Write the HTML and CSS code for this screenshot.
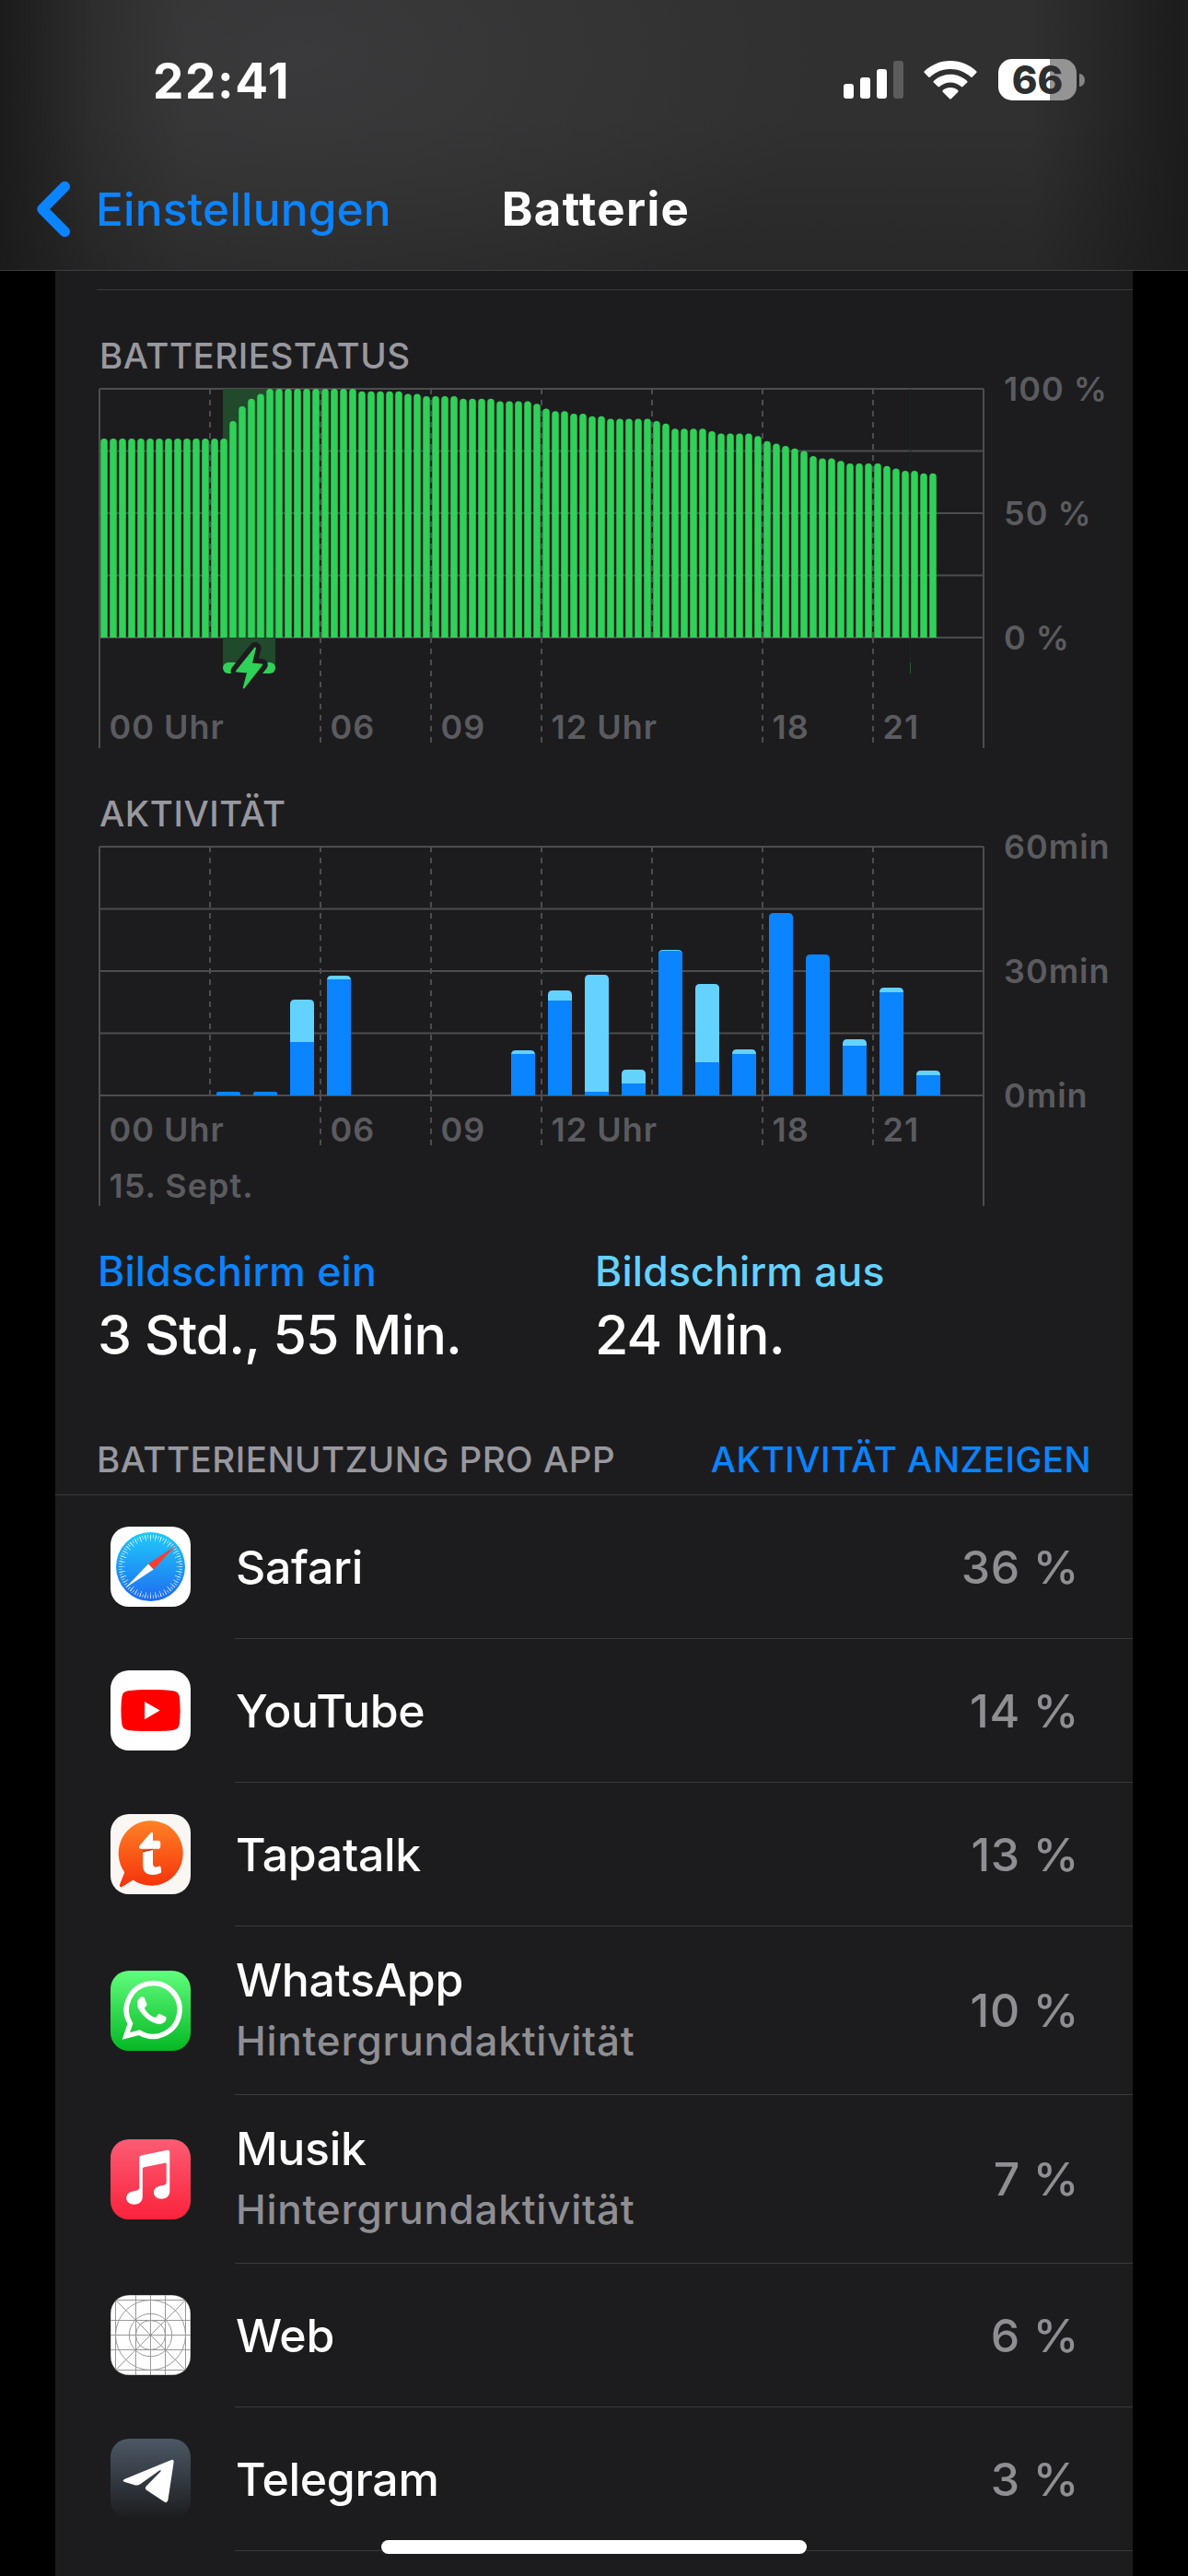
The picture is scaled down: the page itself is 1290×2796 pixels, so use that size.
FILE: index.html
```html
<!DOCTYPE html>
<html lang="de">
<head>
    <meta charset="UTF-8">
    <meta name="viewport" content="width=device-width, initial-scale=1.0">
    <title>Batterie</title>
    <link rel="stylesheet" href="styles.css">
</head>
<body>
    <header class="header">
        <div class="status-bar">
            <div class="time">22:41</div>
            <div class="status-icons">
                <svg class="signal" width="65" height="41" viewBox="0 0 65 41" fill="#fff">
                    <rect x="0" y="25" width="11" height="16" rx="3"/>
                    <rect x="18" y="18" width="11" height="23" rx="3"/>
                    <rect x="36" y="9" width="11" height="32" rx="3"/>
                    <rect x="54" y="0" width="11" height="41" rx="3" fill="#5c5c5d"/>
                </svg>
                <svg class="wifi" width="58" height="42" viewBox="0 0 58 42" fill="#fff">
                    <path d="M29 0C40 0 50 4.300 57.200 11.300Q58 12.200 57.200 13L52.600 17.700Q51.800 18.300 51 17.600C45 12 37.500 9 29 9S13 12 7 17.600Q6.200 18.300 5.400 17.700L.8 13Q0 12.200.8 11.300C8 4.300 18 0 29 0Z"/>
                    <path d="M29 14.700C36 14.700 42.300 17.400 47.200 21.900Q47.900 22.700 47.200 23.500L42.500 28.100Q41.700 28.800 40.900 28.100C37.500 25.200 33.500 23.500 29 23.500S20.500 25.200 17.100 28.100Q16.300 28.800 15.500 28.100L10.800 23.500Q10.100 22.700 10.800 21.900C15.700 17.400 22 14.700 29 14.700Z"/>
                    <path d="M29 29C32.200 29 35 30.200 37.300 32.100Q38 32.900 37.300 33.700L29.800 41.200Q29 42 28.200 41.200L20.700 33.700Q20 32.900 20.700 32.100C23 30.200 25.800 29 29 29Z"/>
                </svg>
                <div class="battery"><span class="battery-level">66</span></div>
                <div class="battery-cap"></div>
            </div>
        </div>
        <nav class="nav-bar">
            <a class="back">
                <svg width="37" height="62" viewBox="0 0 37 62" fill="none" stroke="#0a84ff" stroke-width="11.500" stroke-linecap="round" stroke-linejoin="round">
                    <path d="M30.300 6.500 6 31 30.300 55.500"/>
                </svg>
                <span>Einstellungen</span>
            </a>
            <h1>Batterie</h1>
        </nav>
    </header>

    <main class="card">
        <div class="top-line"></div>

        <h2 class="chart-title title-level">BATTERIESTATUS</h2>
        <svg class="chart" id="levelChart" width="1170" height="410"></svg>

        <h2 class="chart-title title-activity">AKTIVITÄT</h2>
        <svg class="chart" id="activityChart" width="1170" height="410"></svg>

        <div class="summary">
            <div>
                <div class="summary-label screen-on">Bildschirm ein</div>
                <div class="summary-value">3 Std., 55 Min.</div>
            </div>
            <div>
                <div class="summary-label screen-off">Bildschirm aus</div>
                <div class="summary-value">24 Min.</div>
            </div>
        </div>

        <div class="usage-header">
            <span class="usage-title">BATTERIENUTZUNG PRO APP</span>
            <a class="usage-toggle">AKTIVITÄT ANZEIGEN</a>
        </div>

        <ul class="app-list">
            <li class="app-row">
                <svg class="app-icon" viewBox="0 0 87 87">
                    <defs>
                        <linearGradient id="safariBg" x1="0" y1="0" x2="0" y2="1">
                            <stop offset="0" stop-color="#1fcbfb"/>
                            <stop offset="1" stop-color="#1f6bf0"/>
                        </linearGradient>
                    </defs>
                    <rect width="87" height="87" rx="20" fill="#fff"/>
                    <circle cx="43.500" cy="43.500" r="37.500" fill="url(#safariBg)"/>
                    <g fill="none" stroke="#fff" stroke-opacity=".85">
                        <circle cx="43.500" cy="43.500" r="32.800" stroke-width="3.600" pathLength="72" stroke-dasharray=".24 .76" stroke-dashoffset=".12"/>
                        <circle cx="43.500" cy="43.500" r="31.300" stroke-width="6.400" pathLength="36" stroke-dasharray=".12 .88" stroke-dashoffset=".06"/>
                    </g>
                    <path d="M70.400 21 41 40.600 46.700 46.600Z" fill="#ff3b30"/>
                    <path d="M16.500 66.200 41 40.600 46.700 46.600Z" fill="#fff"/>
                </svg>
                <div class="app-info">
                    <div class="app-name">Safari</div>
                </div>
                <div class="app-percent">36 %</div>
            </li>
            <li class="app-row">
                <svg class="app-icon" viewBox="0 0 87 87">
                    <rect width="87" height="87" rx="20" fill="#fff"/>
                    <path d="M43.500 21C54 21 62 21.300 68 22.200 72 22.900 74.200 25 74.700 28.500 76 38 76 49 74.700 58.500 74.200 62 72 64.200 68 64.900 56 66.300 31 66.300 19 64.900 15 64.200 12.900 62 12.400 58.500 11.100 49 11.100 38 12.400 28.500 12.900 25 15 22.900 19 22.200 25 21.300 33 21 43.500 21Z" fill="#f00"/>
                    <path d="M37 34 53.700 43.600 37 53.200Z" fill="#fff"/>
                </svg>
                <div class="app-info">
                    <div class="app-name">YouTube</div>
                </div>
                <div class="app-percent">14 %</div>
            </li>
            <li class="app-row">
                <svg class="app-icon" viewBox="0 0 87 87">
                    <defs>
                        <linearGradient id="tapatalkBg" x1="0" y1="0" x2="0" y2="1">
                            <stop offset="0" stop-color="#ff8124"/>
                            <stop offset="1" stop-color="#f5320c"/>
                        </linearGradient>
                    </defs>
                    <rect width="87" height="87" rx="20" fill="#faf6f4"/>
                    <path d="M43.600 7.300A34.500 35.200 0 1 1 24.500 71.400L12.500 78.900Q9.500 80 10 76.500L15.300 63.200A34.500 35.200 0 0 1 43.600 7.300Z" fill="url(#tapatalkBg)"/>
                    <path d="M35.200 39.500 46 37.500V42L35.200 41.500Z" fill="#c43a10"/>
                    <path d="M43.300 20.400Q46 18.500 46 21.500V28.800H52Q54.200 28.800 54.200 31V35.500Q54.200 37.700 52 37.700H33Q29.800 37.200 31.300 34.600Z" fill="#fff"/>
                    <path d="M35.200 41.500 46 39V54Q46.200 57.600 49.500 57.400L53 56.600Q54.400 56.400 54.500 57.500L55.200 62Q55.300 63.600 54 64.200 49 66.500 43 65.800 35.200 64.500 35.200 56Z" fill="#fff"/>
                </svg>
                <div class="app-info">
                    <div class="app-name">Tapatalk</div>
                </div>
                <div class="app-percent">13 %</div>
            </li>
            <li class="app-row app-row-tall">
                <svg class="app-icon" viewBox="0 0 87 87">
                    <defs>
                        <linearGradient id="whatsappBg" x1="0" y1="0" x2="0" y2="1">
                            <stop offset="0" stop-color="#60fd7c"/>
                            <stop offset="1" stop-color="#05b824"/>
                        </linearGradient>
                    </defs>
                    <rect width="87" height="87" rx="20" fill="url(#whatsappBg)"/>
                    <path d="M16.900 70.800 21.400 57.300A28.900 28.900 0 1 1 31.300 67.200Z" fill="none" stroke="#fff" stroke-width="5.500"/>
                    <path transform="translate(13.200 11.800) scale(2.620)" fill="#fff" d="M17.472 14.382c-.297-.149-1.758-.867-2.030-.967-.273-.099-.471-.148-.67.15-.197.297-.767.966-.94 1.164-.173.199-.347.223-.644.075-.297-.15-1.255-.463-2.390-1.475-.883-.788-1.480-1.761-1.653-2.059-.173-.297-.018-.458.13-.606.134-.133.298-.347.446-.52.149-.174.198-.298.298-.497.099-.198.05-.371-.025-.52-.075-.149-.669-1.612-.916-2.207-.242-.579-.487-.5-.669-.51-.173-.008-.371-.01-.57-.01-.198 0-.52.074-.792.372-.272.297-1.040 1.016-1.040 2.479 0 1.462 1.065 2.875 1.213 3.074.149.198 2.096 3.200 5.077 4.487.709.306 1.262.489 1.694.625.712.227 1.360.195 1.871.118.571-.085 1.758-.719 2.006-1.413.248-.694.248-1.289.173-1.413-.074-.124-.272-.198-.57-.347"/>
                </svg>
                <div class="app-info">
                    <div class="app-name">WhatsApp</div>
                    <div class="app-detail">Hintergrundaktivität</div>
                </div>
                <div class="app-percent">10 %</div>
            </li>
            <li class="app-row app-row-tall">
                <svg class="app-icon" viewBox="0 0 87 87">
                    <defs>
                        <linearGradient id="musicBg" x1="0" y1="0" x2="0" y2="1">
                            <stop offset="0" stop-color="#fb5c74"/>
                            <stop offset="1" stop-color="#fa233b"/>
                        </linearGradient>
                    </defs>
                    <rect width="87" height="87" rx="20" fill="url(#musicBg)"/>
                    <path d="M31.200 20.500Q31.200 18 33.500 17.400L61.500 11.700Q64.300 11.300 64.300 13.800V56C64.300 61.500 60.500 64.700 55.500 64.700 50.500 64.700 47 62 47 58 47 54 49.500 51.500 54 50.600L58 49.800Q60.700 49.200 60.700 46.800V27Q60.700 25.300 59 25.700L36.500 30.300Q34.800 30.700 34.800 32.300V62C34.800 67.500 31 70.700 26 70.700 21 70.700 17.200 68 17.200 64 17.200 60 19.700 57.500 24 56.600L28.500 55.600Q31.200 55 31.200 52.600Z" fill="#fff"/>
                </svg>
                <div class="app-info">
                    <div class="app-name">Musik</div>
                    <div class="app-detail">Hintergrundaktivität</div>
                </div>
                <div class="app-percent">7 %</div>
            </li>
            <li class="app-row">
                <svg class="app-icon" viewBox="0 0 87 87">
                    <clipPath id="webClip"><rect width="87" height="87" rx="20"/></clipPath>
                    <g clip-path="url(#webClip)" fill="none" stroke="#999" stroke-width="1">
                        <rect width="87" height="87" rx="20" fill="#fff"/>
                        <path d="M5.500 0V87M27.500 0V87M43.500 0V87M59.500 0V87M81.500 0V87M0 5.500H87M0 27.500H87M0 43.500H87M0 59.500H87M0 81.500H87M0 0 87 87M87 0 0 87"/>
                        <circle cx="43.500" cy="43.500" r="38"/>
                        <circle cx="43.500" cy="43.500" r="23.200"/>
                        <circle cx="43.500" cy="43.500" r="16"/>
                    </g>
                </svg>
                <div class="app-info">
                    <div class="app-name">Web</div>
                </div>
                <div class="app-percent">6 %</div>
            </li>
            <li class="app-row">
                <svg class="app-icon" viewBox="0 0 87 87">
                    <defs>
                        <linearGradient id="telegramBg" x1="0" y1="0" x2="0" y2="1">
                            <stop offset="0" stop-color="#4c5865"/>
                            <stop offset="1" stop-color="#1c1c1e"/>
                        </linearGradient>
                    </defs>
                    <rect width="87" height="87" rx="20" fill="url(#telegramBg)"/>
                    <path d="M65.500 23.200Q69 21.700 68.600 25.800L62.500 66.200Q61.700 70.700 58 68.300L39.500 56Q36.500 54 39 51.300L54.500 35.500Q55.500 33.500 53 34.500L32 49.500Q29.300 51.200 26.300 50.300L15.500 46.900Q11.600 45.500 15.500 43.700Z" fill="#fff"/>
                </svg>
                <div class="app-info">
                    <div class="app-name">Telegram</div>
                </div>
                <div class="app-percent">3 %</div>
            </li>
        </ul>
    </main>

    <div class="home-indicator"></div>

    <script src="charts.js"></script>
</body>
</html>
```
FILE: styles.css
```css
:root {
    --blue: #0a84ff;
    --cyan: #64d2ff;
    --green: #30d158;
    --card: #1c1c1e;
    --line: #3a3a3c;
    --gray: #8e8e93;
}

* {
    box-sizing: border-box;
    margin: 0;
    padding: 0;
}

body {
    width: 1290px;
    height: 2796px;
    overflow: hidden;
    background: #000;
    color: #fff;
    font-family: 'Inter', sans-serif;
}

.header {
    height: 294px;
    border-bottom: 1px solid #3d3d3f;
    background:
        linear-gradient(90deg, rgba(26, 26, 26, 0.95) 0, rgba(26, 26, 26, 0.3) 100px, rgba(26, 26, 26, 0) 200px, rgba(26, 26, 26, 0) 1120px, rgba(26, 26, 26, 0.95) 100%),
        radial-gradient(ellipse 560px 330px at 330px 60px, rgba(62, 62, 64, 0.7), rgba(62, 62, 64, 0)),
        linear-gradient(180deg, #303031 0, #303031 45%, #282828 100%);
}

.status-bar {
    display: flex;
    justify-content: space-between;
    align-items: center;
    height: 176px;
    padding: 0 112px 0 166px;
}

.time {
    font-size: 53px;
    font-weight: 700;
    letter-spacing: 1.6px;
}

.status-icons {
    display: flex;
    align-items: center;
    margin-bottom: 3px;
}

.wifi {
    margin-left: 22px;
}

.battery {
    display: flex;
    align-items: center;
    justify-content: center;
    width: 85px;
    height: 45px;
    margin-left: 23px;
    border-radius: 15px;
    background: linear-gradient(90deg, #fff 56px, #949494 56px);
}

.battery-level {
    color: #2e2e2f;
    font-size: 42px;
    font-weight: 800;
    line-height: 45px;
}

.battery-cap {
    width: 6px;
    height: 14px;
    margin-left: 3px;
    border-radius: 0 6px 6px 0 / 0 7px 7px 0;
    background: #858586;
}

.nav-bar {
    display: grid;
    grid-template-columns: 1fr auto 1fr;
    align-items: center;
    height: 101px;
    padding: 0 40px;
}

.back {
    display: flex;
    align-items: center;
    gap: 27px;
    color: var(--blue);
    font-size: 49.5px;
    font-weight: 500;
    letter-spacing: 0.2px;
}

h1 {
    padding-left: 4px;
    font-size: 51px;
    font-weight: 700;
    letter-spacing: 1.3px;
}

.card {
    width: 1170px;
    height: 2502px;
    margin: 0 auto;
    overflow: hidden;
    background: var(--card);
}

.top-line {
    height: 1px;
    margin: 20px 0 0 45px;
    background: var(--line);
}

.chart-title {
    height: 36px;
    padding-left: 48px;
    color: #98989f;
    font-size: 38.5px;
    font-weight: 500;
    line-height: 36px;
    letter-spacing: 0.5px;
}

.title-level {
    margin-top: 53px;
}

.title-activity {
    margin-top: 51px;
}

.chart {
    display: block;
    overflow: visible;
}

.chart text {
    fill: #5b5b5f;
    font-size: 36px;
    font-weight: 600;
    letter-spacing: 1px;
}

.grid-line {
    stroke: #4d4d4f;
    stroke-width: 2;
}

.dashed {
    stroke-dasharray: 6 6;
}

.level-bar {
    fill: var(--green);
}

.bar-on {
    fill: var(--blue);
}

.bar-off {
    fill: var(--cyan);
}

.summary {
    display: grid;
    grid-template-columns: 540px 1fr;
    margin-top: 42px;
    padding-left: 46px;
}

.summary-label {
    font-size: 44.5px;
    font-weight: 500;
    line-height: 54px;
    letter-spacing: 0.2px;
}

.screen-on {
    color: var(--blue);
}

.screen-off {
    color: var(--cyan);
}

.summary-value {
    margin-top: 6px;
    font-size: 59px;
    font-weight: 500;
    line-height: 71px;
    letter-spacing: -0.9px;
}

.usage-header {
    display: flex;
    justify-content: space-between;
    height: 63px;
    margin-top: 76px;
    padding: 0 45px 0 45px;
    border-bottom: 1px solid var(--line);
    font-size: 38.5px;
    font-weight: 500;
    line-height: 48px;
    letter-spacing: 0.5px;
}

.usage-title {
    color: #98989f;
}

.usage-toggle {
    color: var(--blue);
}

.app-list {
    list-style: none;
}

.app-row {
    display: grid;
    grid-template-columns: 136px 1fr auto;
    align-items: center;
    height: 156px;
    padding-left: 60px;
    padding-right: 58px;
    background: linear-gradient(var(--line), var(--line)) 195px 100% / 100% 1px no-repeat;
}

.app-row-tall {
    height: 183px;
}

.app-icon {
    width: 87px;
    height: 87px;
    margin-bottom: 1px;
}

.app-row-tall .app-info {
    margin-bottom: 2px;
}

.app-name {
    font-size: 50px;
    font-weight: 500;
    line-height: 66px;
    letter-spacing: -0.3px;
}

.app-detail {
    color: var(--gray);
    font-size: 44px;
    font-weight: 500;
    line-height: 66px;
    letter-spacing: 0.75px;
}

.app-percent {
    color: var(--gray);
    font-size: 50px;
    font-weight: 500;
    letter-spacing: 0.6px;
}

.app-row-tall .app-percent {
    margin-bottom: 1px;
}

/* floats over the list */
.home-indicator {
    position: absolute;
    left: 414px;
    top: 2757px;
    width: 462px;
    height: 15px;
    border-radius: 8px;
    background: #fff;
}
```
FILE: charts.js
```js
const SVG_NS = 'http://www.w3.org/2000/svg';

// Plot area inside both charts
const LEFT = 48;
const TOP = 18;
const HEIGHT = 270;
const WIDTH = 960;
const BOTTOM = TOP + HEIGHT;
const HOUR = WIDTH / 24;

// Battery level every 15 minutes: [percent, count]
const levels = [
    [80, 14], [87, 1], [93, 1], [96, 1], [98, 1], [100, 10], [99, 5], [98, 2],
    [97, 4], [96, 4], [95, 4], [94, 1], [92, 1], [91, 2], [90, 2], [89, 2],
    [88, 5], [87, 1], [86, 1], [84, 4], [83, 1], [82, 4], [81, 1], [79, 1],
    [78, 1], [77, 1], [76, 1], [75, 1], [73, 1], [72, 2], [71, 1], [70, 4],
    [69, 1], [68, 1], [67, 2], [66, 2]
];

// Activity per hour: [hour, screen on, total] as bar heights
const activity = [
    [3, 4, 4], [4, 4, 4], [5, 58, 104], [6, 126, 130], [11, 45, 49],
    [12, 103, 114], [13, 4, 131], [14, 13, 28], [15, 157, 158], [16, 36, 121],
    [17, 45, 50], [18, 198, 198], [19, 153, 153], [20, 54, 61], [21, 112, 117],
    [22, 22, 27]
];

const hours = [['00 Uhr', 0], ['06', 6], ['09', 9], ['12 Uhr', 12], ['18', 18], ['21', 21]];

function add(svg, name, attrs, text) {
    const el = document.createElementNS(SVG_NS, name);
    for (const key in attrs) el.setAttribute(key, attrs[key]);
    if (text) el.textContent = text;
    svg.appendChild(el);
    return el;
}

function line(svg, x1, y1, x2, y2, cls) {
    add(svg, 'line', { x1, y1, x2, y2, class: cls || 'grid-line' });
}

function label(svg, text, x, y) {
    add(svg, 'text', { x, y }, text);
}

function drawGrid(svg, tickEnd, labelY) {
    for (let i = 0; i <= 4; i++) {
        const y = TOP + i * HEIGHT / 4;
        line(svg, LEFT, y, LEFT + WIDTH, y);
    }
    line(svg, LEFT, TOP, LEFT, 408);
    line(svg, LEFT + WIDTH, TOP, LEFT + WIDTH, 408);
    for (let h = 3; h < 24; h += 3) {
        const x = LEFT + h * HOUR;
        line(svg, x, TOP, x, BOTTOM, 'grid-line dashed');
        // tick below the axis only where there is a label
        if (hours.some(item => item[1] === h)) {
            line(svg, x, BOTTOM, x, tickEnd, 'grid-line dashed');
        }
    }
    hours.forEach(([text, h]) => label(svg, text, LEFT + h * HOUR + 10.5, labelY));
}

// Battery level chart
const levelChart = document.getElementById('levelChart');
drawGrid(levelChart, 402, 398);
add(levelChart, 'rect', { x: 182, y: TOP, width: 57, height: 303, fill: '#21492b' });
add(levelChart, 'rect', { x: 182, y: 315, width: 57, height: 12, rx: 6, fill: '#30d158' });
const bolt = 'M217 299.500 212.800 316.500 224.300 317.500 204.700 342.500 209.300 325.500 197 324.500Z';
add(levelChart, 'path', { d: bolt, fill: '#1c1c1e', stroke: '#1c1c1e', 'stroke-width': 13, 'stroke-linejoin': 'round' });
add(levelChart, 'path', { d: bolt, fill: '#30d158', stroke: '#30d158', 'stroke-width': 2, 'stroke-linejoin': 'round' });
add(levelChart, 'rect', { x: 928, y: TOP, width: 1, height: 297, fill: '#1d241f' });
add(levelChart, 'rect', { x: 928, y: 315, width: 1, height: 12, fill: '#215a30' });

let index = 0;
levels.forEach(([percent, count]) => {
    for (let i = 0; i < count; i++) {
        const x = LEFT + 1.25 + index * 10;
        const y = BOTTOM - percent * HEIGHT / 100;
        add(levelChart, 'path', {
            class: 'level-bar',
            d: `M${x} ${BOTTOM}V${y + 3.5}a3.750 3.500 0 0 1 7.500 0V${BOTTOM}Z`
        });
        index++;
    }
});
label(levelChart, '100 %', 1030, TOP + 13);
label(levelChart, '50 %', 1030, TOP + 148);
label(levelChart, '0 %', 1030, TOP + 283);

// Activity chart
const activityChart = document.getElementById('activityChart');
drawGrid(activityChart, 342, 338);
activity.forEach(([hour, on, total]) => {
    const x = LEFT + hour * HOUR + 7;
    const y = BOTTOM - total;
    const r = Math.min(5, total / 2);
    const off = total - on;
    add(activityChart, 'path', {
        class: off ? 'bar-off' : 'bar-on',
        d: `M${x} ${BOTTOM}V${y + r}q0-${r} ${r}-${r}h${26 - 2 * r}q${r} 0 ${r} ${r}V${BOTTOM}Z`
    });
    if (off > 1) {
        add(activityChart, 'rect', { class: 'bar-on', x, y: BOTTOM - on, width: 26, height: on });
    } else if (off === 1) {
        add(activityChart, 'path', {
            class: 'bar-on',
            d: `M${x} ${BOTTOM}V${y + r}q0-${r - 1} ${r}-${r - 1}h${26 - 2 * r}q${r} 0 ${r} ${r - 1}V${BOTTOM}Z`
        });
    }
});
label(activityChart, '15. Sept.', LEFT + 10.5, 399);
label(activityChart, '60min', 1030, TOP + 13);
label(activityChart, '30min', 1030, TOP + 148);
label(activityChart, '0min', 1030, TOP + 283);
```
